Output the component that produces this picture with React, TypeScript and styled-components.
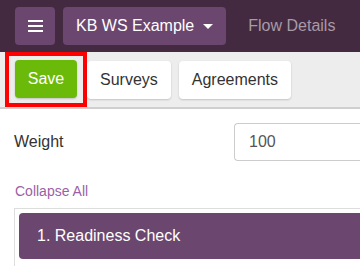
import React from "react";
import styled, { createGlobalStyle } from "styled-components";

const Global = createGlobalStyle`
  html, body { margin: 0; padding: 0; background: #ffffff; overflow: hidden; }
  body { font-family: "Liberation Sans", Arial, sans-serif; color: #333333; }
  * { box-sizing: border-box; }
`;

const Page = styled.div`
  width: 360px;
  height: 266px;
  overflow: hidden;
  display: flex;
  flex-direction: column;
`;

const Header = styled.header`
  height: 52px;
  background: #432a40;
  display: flex;
  align-items: flex-start;
  padding: 7px 15px 0 15px;
  gap: 8px;
  flex-shrink: 0;
`;

const NavButton = styled.button<{ $square?: boolean }>`
  height: 38px;
  ${(p) => (p.$square ? "width: 40px; padding: 0;" : "padding: 0 13px;")}
  background: #6b476f;
  border: none;
  border-radius: 4px;
  color: #ffffff;
  font-family: "Liberation Sans", Arial, sans-serif;
  font-size: 16px;
  display: flex;
  align-items: center;
  justify-content: center;
  gap: 9px;
`;

const Burger = styled.span`
  display: flex;
  flex-direction: column;
  gap: 3px;
  width: 15px;
  span {
    display: block;
    height: 2px;
    background: #ffffff;
  }
`;

const Caret = styled.span`
  width: 0;
  height: 0;
  border-left: 5px solid transparent;
  border-right: 5px solid transparent;
  border-top: 5px solid #ffffff;
  margin-top: 1px;
`;

const NavLink = styled.span`
  color: #a89aa7;
  font-size: 16px;
  line-height: 38px;
  margin-left: 14px;
`;

const Toolbar = styled.div`
  height: 57px;
  background: #ededed;
  border-bottom: 2px solid #cfcfcf;
  display: flex;
  align-items: flex-start;
  padding-left: 5px;
  flex-shrink: 0;
`;

const Highlight = styled.div`
  border: 4px solid #ff0000;
  height: 55px;
  padding: 4px 6px 0 6px;
  display: flex;
`;

const ToolButton = styled.button<{ $primary?: boolean }>`
  height: 38px;
  padding: 0 13px;
  ${(p) => (p.$primary ? "width: 62px; padding: 0;" : "")}
  margin-top: ${(p) => (p.$primary ? "0" : "9px")};
  margin-right: ${(p) => (p.$primary ? "0" : "8px")};
  border: none;
  border-radius: 4px;
  background: ${(p) => (p.$primary ? "#6bb909" : "#ffffff")};
  color: ${(p) => (p.$primary ? "#ffffff" : "#333333")};
  font-family: "Liberation Sans", Arial, sans-serif;
  font-size: 16px;
  box-shadow: 0 1px 2px rgba(0, 0, 0, 0.18);
`;

const Content = styled.div`
  padding: 14px 0 0 14px;
  display: flex;
  flex-direction: column;
`;

const FieldRow = styled.div`
  display: flex;
  align-items: center;
  height: 38px;
`;

const Label = styled.label`
  width: 220px;
  flex-shrink: 0;
  font-size: 16px;
  color: #333333;
`;

const Input = styled.input`
  flex: 1;
  min-width: 0;
  height: 38px;
  border: 1px solid #cccccc;
  border-right: none;
  border-radius: 4px 0 0 4px;
  padding: 0 14px;
  font-family: "Liberation Sans", Arial, sans-serif;
  font-size: 16px;
  color: #555555;
  outline: none;
`;

const CollapseLink = styled.a`
  margin-top: 22px;
  font-size: 14px;
  color: #9b5fa6;
  line-height: 16px;
  text-decoration: none;
  padding-left: 1px;
`;

const Panel = styled.div`
  margin-top: 9px;
  border: 1px solid #dddddd;
  border-right: none;
  padding: 4px 0 0 4px;
  height: 70px;
`;

const PanelHeader = styled.div`
  height: 46px;
  background: #6b476f;
  border-radius: 4px 0 0 4px;
  color: #ffffff;
  font-size: 16px;
  display: flex;
  align-items: center;
  padding-left: 18px;
`;

export default function App() {
  return (
    <Page>
      <Global />
      <Header>
        <NavButton $square aria-label="Menu">
          <Burger>
            <span />
            <span />
            <span />
          </Burger>
        </NavButton>
        <NavButton>
          KB WS Example
          <Caret />
        </NavButton>
        <NavLink>Flow Details</NavLink>
      </Header>
      <Toolbar>
        <Highlight>
          <ToolButton $primary>Save</ToolButton>
        </Highlight>
        <ToolButton>Surveys</ToolButton>
        <ToolButton>Agreements</ToolButton>
      </Toolbar>
      <Content>
        <FieldRow>
          <Label>Weight</Label>
          <Input defaultValue="100" />
        </FieldRow>
        <CollapseLink>Collapse All</CollapseLink>
        <Panel>
          <PanelHeader>1. Readiness Check</PanelHeader>
        </Panel>
      </Content>
    </Page>
  );
}
